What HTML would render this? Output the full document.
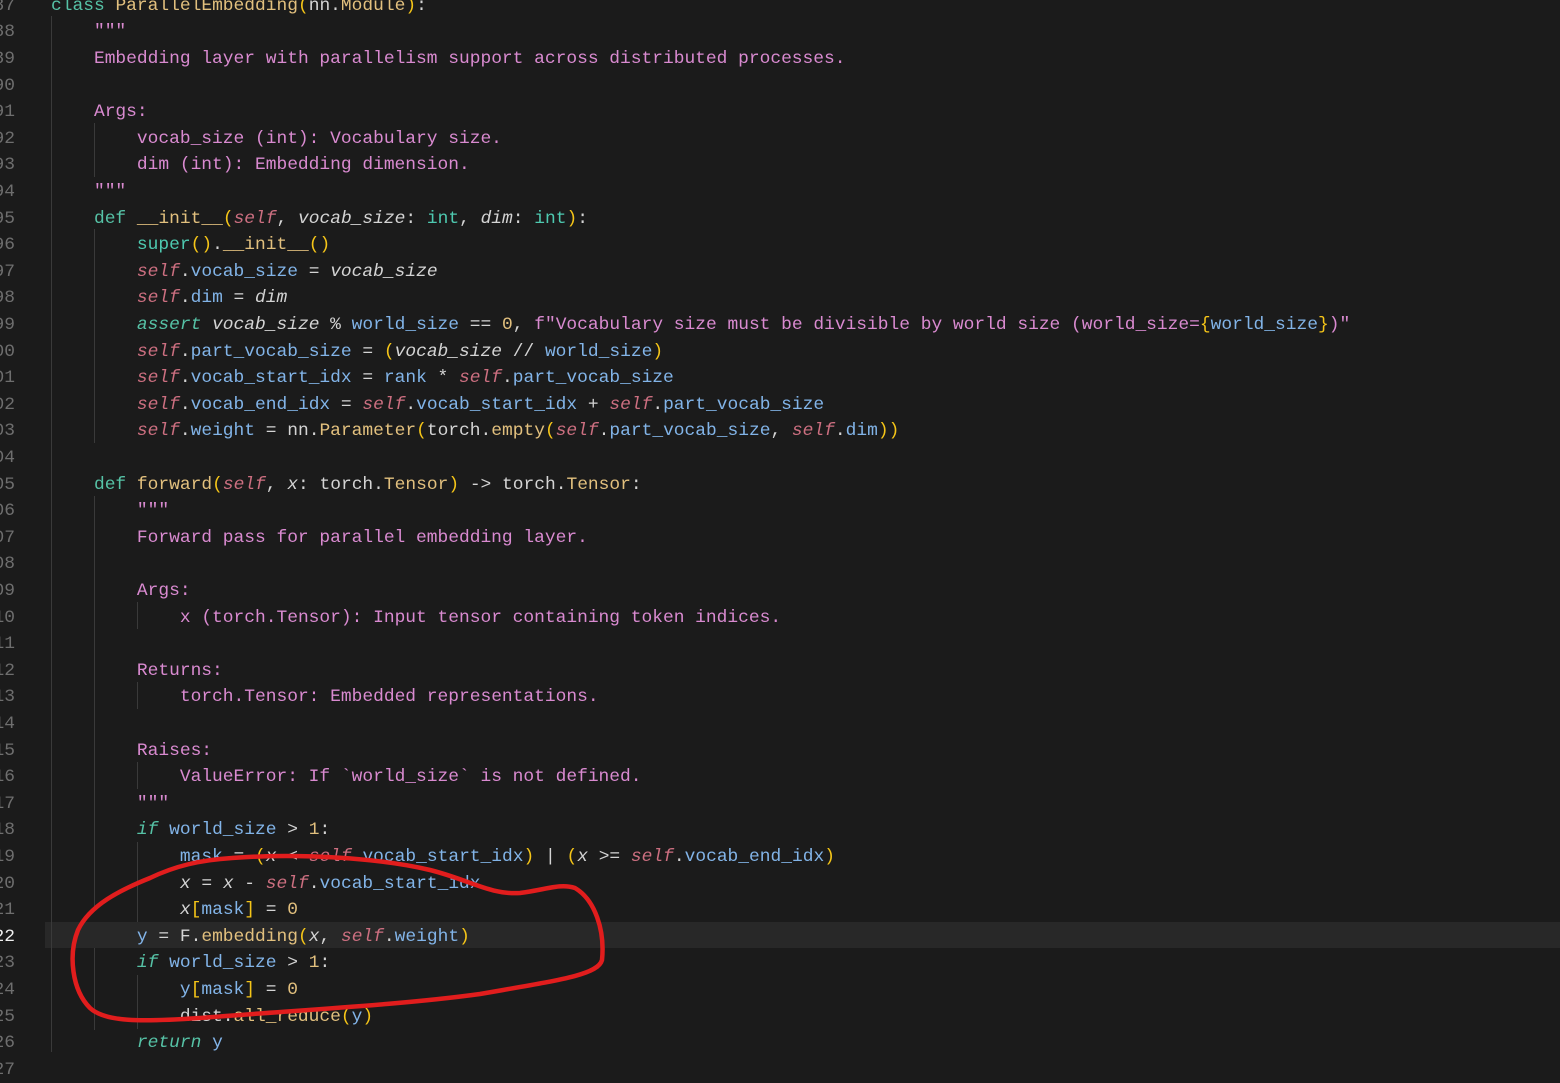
<!DOCTYPE html>
<html><head><meta charset="utf-8"><style>
body{margin:0;width:1560px;height:1079px;background:#1b1b1b;overflow:hidden;position:relative;font-family:"Liberation Mono",monospace;}
.l{position:absolute;left:51px;height:26.6px;line-height:26.6px;font-size:17.9px;color:#d4d4d4;white-space:pre;}
.n{position:absolute;left:-40px;width:55px;text-align:right;height:26.6px;line-height:26.6px;font-size:17.9px;color:#6e6e6e;white-space:pre;font-family:"Liberation Mono",monospace}
.k{color:#56c2a6}.ki{color:#56c2a6;font-style:italic}.f{color:#e2c07e}.v{color:#82b4e8}.s{color:#cc6f80;font-style:italic}
.p{color:#d4d4d4;font-style:italic}.b{color:#f5c518}.d{color:#d98ad0}.num{color:#e2c07e}.c{color:#4ec9b0}
.g{position:absolute;width:1px;background:#3a3a3a}
.hl{position:absolute;left:45px;right:0;top:922px;height:26px;background:#282828}
</style></head><body>
<div class="hl"></div>
<div class="g" style="left:51px;top:16px;height:1036px"></div>
<div class="g" style="left:94px;top:123px;height:54px"></div>
<div class="g" style="left:94px;top:229px;height:214px"></div>
<div class="g" style="left:94px;top:496px;height:414px"></div>
<div class="g" style="left:94px;top:948px;height:82px"></div>
<div class="g" style="left:137px;top:602px;height:27px"></div>
<div class="g" style="left:137px;top:682px;height:27px"></div>
<div class="g" style="left:137px;top:762px;height:27px"></div>
<div class="g" style="left:137px;top:842px;height:80px"></div>
<div class="g" style="left:137px;top:975px;height:54px"></div>
<div id="c"></div>
<script>
const L=[
'<span class="k">class</span> <span class="f">ParallelEmbedding</span><span class="b">(</span>nn.<span class="f">Module</span><span class="b">)</span>:',
'    <span class="d">"""</span>',
'    <span class="d">Embedding layer with parallelism support across distributed processes.</span>',
'',
'    <span class="d">Args:</span>',
'        <span class="d">vocab_size (int): Vocabulary size.</span>',
'        <span class="d">dim (int): Embedding dimension.</span>',
'    <span class="d">"""</span>',
'    <span class="k">def</span> <span class="f">__init__</span><span class="b">(</span><span class="s">self</span>, <span class="p">vocab_size</span>: <span class="c">int</span>, <span class="p">dim</span>: <span class="c">int</span><span class="b">)</span>:',
'        <span class="c">super</span><span class="b">()</span>.<span class="f">__init__</span><span class="b">()</span>',
'        <span class="s">self</span>.<span class="v">vocab_size</span> = <span class="p">vocab_size</span>',
'        <span class="s">self</span>.<span class="v">dim</span> = <span class="p">dim</span>',
'        <span class="ki">assert</span> <span class="p">vocab_size</span> % <span class="v">world_size</span> == <span class="num">0</span>, <span class="d">f"Vocabulary size must be divisible by world size (world_size=</span><span class="b">{</span><span class="v">world_size</span><span class="b">}</span><span class="d">)"</span>',
'        <span class="s">self</span>.<span class="v">part_vocab_size</span> = <span class="b">(</span><span class="p">vocab_size</span> // <span class="v">world_size</span><span class="b">)</span>',
'        <span class="s">self</span>.<span class="v">vocab_start_idx</span> = <span class="v">rank</span> * <span class="s">self</span>.<span class="v">part_vocab_size</span>',
'        <span class="s">self</span>.<span class="v">vocab_end_idx</span> = <span class="s">self</span>.<span class="v">vocab_start_idx</span> + <span class="s">self</span>.<span class="v">part_vocab_size</span>',
'        <span class="s">self</span>.<span class="v">weight</span> = nn.<span class="f">Parameter</span><span class="b">(</span>torch.<span class="f">empty</span><span class="b">(</span><span class="s">self</span>.<span class="v">part_vocab_size</span>, <span class="s">self</span>.<span class="v">dim</span><span class="b">))</span>',
'',
'    <span class="k">def</span> <span class="f">forward</span><span class="b">(</span><span class="s">self</span>, <span class="p">x</span>: torch.<span class="f">Tensor</span><span class="b">)</span> -> torch.<span class="f">Tensor</span>:',
'        <span class="d">"""</span>',
'        <span class="d">Forward pass for parallel embedding layer.</span>',
'',
'        <span class="d">Args:</span>',
'            <span class="d">x (torch.Tensor): Input tensor containing token indices.</span>',
'',
'        <span class="d">Returns:</span>',
'            <span class="d">torch.Tensor: Embedded representations.</span>',
'',
'        <span class="d">Raises:</span>',
'            <span class="d">ValueError: If `world_size` is not defined.</span>',
'        <span class="d">"""</span>',
'        <span class="ki">if</span> <span class="v">world_size</span> > <span class="num">1</span>:',
'            <span class="v">mask</span> = <span class="b">(</span><span class="p">x</span> < <span class="s">self</span>.<span class="v">vocab_start_idx</span><span class="b">)</span> | <span class="b">(</span><span class="p">x</span> >= <span class="s">self</span>.<span class="v">vocab_end_idx</span><span class="b">)</span>',
'            <span class="p">x</span> = <span class="p">x</span> - <span class="s">self</span>.<span class="v">vocab_start_idx</span>',
'            <span class="p">x</span><span class="b">[</span><span class="v">mask</span><span class="b">]</span> = <span class="num">0</span>',
'        <span class="v">y</span> = F.<span class="f">embedding</span><span class="b">(</span><span class="p">x</span>, <span class="s">self</span>.<span class="v">weight</span><span class="b">)</span>',
'        <span class="ki">if</span> <span class="v">world_size</span> > <span class="num">1</span>:',
'            <span class="v">y</span><span class="b">[</span><span class="v">mask</span><span class="b">]</span> = <span class="num">0</span>',
'            dist.<span class="f">all_reduce</span><span class="b">(</span><span class="v">y</span><span class="b">)</span>',
'        <span class="ki">return</span> <span class="v">y</span>',
''
];
let h='';
for(let i=0;i<41;i++){const t=(-7.3+26.6*i).toFixed(1);const num=87+i;
h+='<div class="n" style="top:'+t+'px;'+(num==122?'color:#f0f0f0':'')+'">'+num+'</div>';
h+='<div class="l" style="top:'+t+'px">'+L[i]+'</div>';}
document.getElementById('c').innerHTML=h;
</script>
<svg width="1560" height="1079" style="position:absolute;left:0;top:0">
<path d="M232,858 C300,853 380,858 430,870 C470,880 490,895 520,893 C545,890 560,883 575,888 C595,900 605,930 602,960 C598,975 560,980 480,994 C400,1005 300,1010 200,1018 C140,1022 105,1022 90,1008 C72,990 68,955 78,930 C90,905 120,890 150,878 C175,866 200,860 232,858" fill="none" stroke="#e11d1d" stroke-width="4.5" stroke-linecap="round"/>
</svg>
</body></html>
